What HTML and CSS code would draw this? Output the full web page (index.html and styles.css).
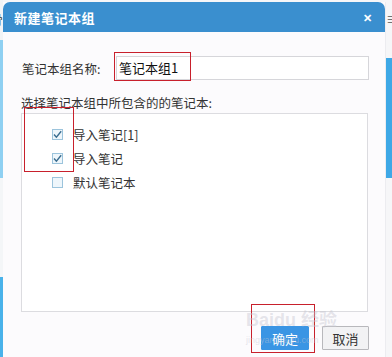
FILE: index.html
```html
<!DOCTYPE html>
<html lang="zh">
<head>
<meta charset="utf-8">
<link rel="stylesheet" href="styles.css">
</head>
<body>
<div class="page">
  <div class="side side-left">
    <div class="sl-top"><span class="edge-glyph">骨</span></div>
    <div class="sl-light"></div>
    <div class="sl-white"></div>
    <div class="sl-blue"></div>
  </div>
  <div class="dialog">
    <div class="titlebar">
      <span class="title">新建笔记本组</span>
      <span class="close">✕</span>
    </div>
    <div class="body">
      <div class="name-row">
        <label class="label">笔记本组名称:</label>
        <div class="input">笔记本组1</div>
        <div class="mark mark-input"></div>
      </div>
      <div class="hint">选择笔记本组中所包含的的笔记本:</div>
      <div class="list">
        <div class="item"><span class="cb checked"><svg viewBox="0 0 11 11" width="11" height="11"><path d="M2 5.5 L4.4 8.2 L9.2 2.3" fill="none" stroke="#3a6d8f" stroke-width="1.4"/></svg></span><span>导入笔记[1]</span></div>
        <div class="item"><span class="cb checked"><svg viewBox="0 0 11 11" width="11" height="11"><path d="M2 5.5 L4.4 8.2 L9.2 2.3" fill="none" stroke="#3a6d8f" stroke-width="1.4"/></svg></span><span>导入笔记</span></div>
        <div class="item"><span class="cb"></span><span>默认笔记本</span></div>
        <div class="mark mark-checks"></div>
      </div>
      <div class="actions">
        <div class="btn-wrap">
          <button class="btn primary">确定</button>
          <div class="mark mark-ok"></div>
        </div>
        <button class="btn">取消</button>
        <div class="watermark">Bai<span class="wm-paw">d</span>u 经验<br><span class="wm-small">jingyan.baidu.com</span></div>
      </div>
    </div>
  </div>
  <div class="side side-right">
    <div class="sr-top"><span class="edge-glyph">≡</span></div>
    <div class="sr-blue"></div>
  </div>
</div>
</body>
</html>
```

FILE: styles.css
```css
html, body {
  margin: 0;
  padding: 0;
}
body {
  width: 392px;
  height: 357px;
  overflow: hidden;
  background: #f6f6f8;
  font-family: "Noto Sans CJK SC", "Liberation Sans", sans-serif;
  font-size: 12px;
  color: #333;
}
.page {
  display: flex;
  height: 357px;
}
.side {
  display: flex;
  flex-direction: column;
  overflow: hidden;
}
.side-left {
  width: 3px;
}
.sl-top {
  height: 40px;
  background: #f2f4f6;
  position: relative;
}
.edge-glyph {
  position: absolute;
  top: 12px;
  font-size: 13px;
  line-height: 13px;
  color: #444;
}
.sl-top .edge-glyph {
  left: -10px;
}
.sl-light {
  height: 138px;
  background: #8fd0f2;
}
.sl-white {
  height: 99px;
  background: #f4f6f8;
}
.sl-blue {
  flex: 1;
  background: #49b2ea;
}
.side-right {
  width: 6px;
}
.sr-top {
  height: 58px;
  background: #f6f6f8;
  position: relative;
}
.sr-top .edge-glyph {
  left: 0;
  top: 12px;
  color: #555;
}
.sr-blue {
  height: 120px;
  background: #3ea8e6;
}

.dialog {
  width: 383px;
  margin-top: 2px;
  display: flex;
  flex-direction: column;
  background: #fcfbfd;
  border-right: 1px solid #ececf0;
  box-sizing: border-box;
}
.titlebar {
  height: 30px;
  background: #3a8fcf;
  border-radius: 7px 7px 0 0;
  display: flex;
  align-items: center;
  justify-content: space-between;
  padding: 0 13px 0 11px;
  color: #fff;
}
.title {
  font-size: 13px;
  font-weight: bold;
  letter-spacing: 0.5px;
}
.close {
  font-size: 11px;
  font-weight: bold;
}
.body {
  flex: 1;
  display: flex;
  flex-direction: column;
  padding: 24px 16px 0 18px;
}
.name-row {
  position: relative;
  display: flex;
  align-items: center;
  height: 24px;
}
.label {
  width: 94px;
  padding-left: 1px;
  font-size: 12.5px;
  color: #333;
}
.input {
  width: 253px;
  height: 24px;
  box-sizing: border-box;
  border: 1px solid #d6d6da;
  background: #fff;
  padding-left: 2px;
  line-height: 22px;
  font-size: 13px;
  color: #111;
}
.mark {
  position: absolute;
  border: 1px solid #c8202c;
  box-sizing: border-box;
  pointer-events: none;
}
.mark-input {
  left: 93px;
  top: -4px;
  width: 77px;
  height: 29px;
}
.hint {
  margin-top: 14px;
  font-size: 12.5px;
  line-height: 18px;
  color: #333;
}
.list {
  position: relative;
  margin-top: 1px;
  width: 347px;
  height: 199px;
  box-sizing: border-box;
  border: 1px solid #dcdce0;
  background: #fff;
  padding: 8px 0 0 30px;
  display: flex;
  flex-direction: column;
}
.item {
  display: flex;
  align-items: center;
  height: 24px;
  font-size: 12.5px;
  color: #333;
}
.cb {
  width: 11px;
  height: 11px;
  box-sizing: border-box;
  border: 1px solid #9cc4dc;
  background: #eef6fb;
  margin-right: 10px;
  display: flex;
}
.cb svg {
  margin: -1px;
}
.mark-checks {
  left: 2px;
  top: -7px;
  width: 50px;
  height: 65px;
}
.actions {
  position: relative;
  display: flex;
  justify-content: flex-end;
  align-items: center;
  gap: 13px;
  margin-top: 14px;
}
.btn-wrap {
  position: relative;
  display: flex;
}
.btn {
  font-family: "Noto Sans CJK SC", "Liberation Sans", sans-serif;
  font-size: 13px;
  width: 47px;
  height: 24px;
  padding: 0;
  border: 1px solid #b8b8bc;
  background: #f2f2f4;
  color: #333;
  border-radius: 1px;
}
.btn.primary {
  width: 48px;
  background: #3a95e4;
  border-color: #3a95e4;
  color: #fff;
}
.mark-ok {
  left: -10px;
  top: -22px;
  width: 64px;
  height: 49px;
}
.watermark {
  position: absolute;
  right: 32px;
  top: -14px;
  font-family: "Liberation Sans", "Noto Sans CJK SC", sans-serif;
  font-size: 18px;
  font-weight: bold;
  line-height: 17px;
  color: rgba(200, 200, 210, 0.45);
  pointer-events: none;
  text-align: left;
}
.wm-small {
  font-size: 9px;
  font-weight: normal;
}
```
